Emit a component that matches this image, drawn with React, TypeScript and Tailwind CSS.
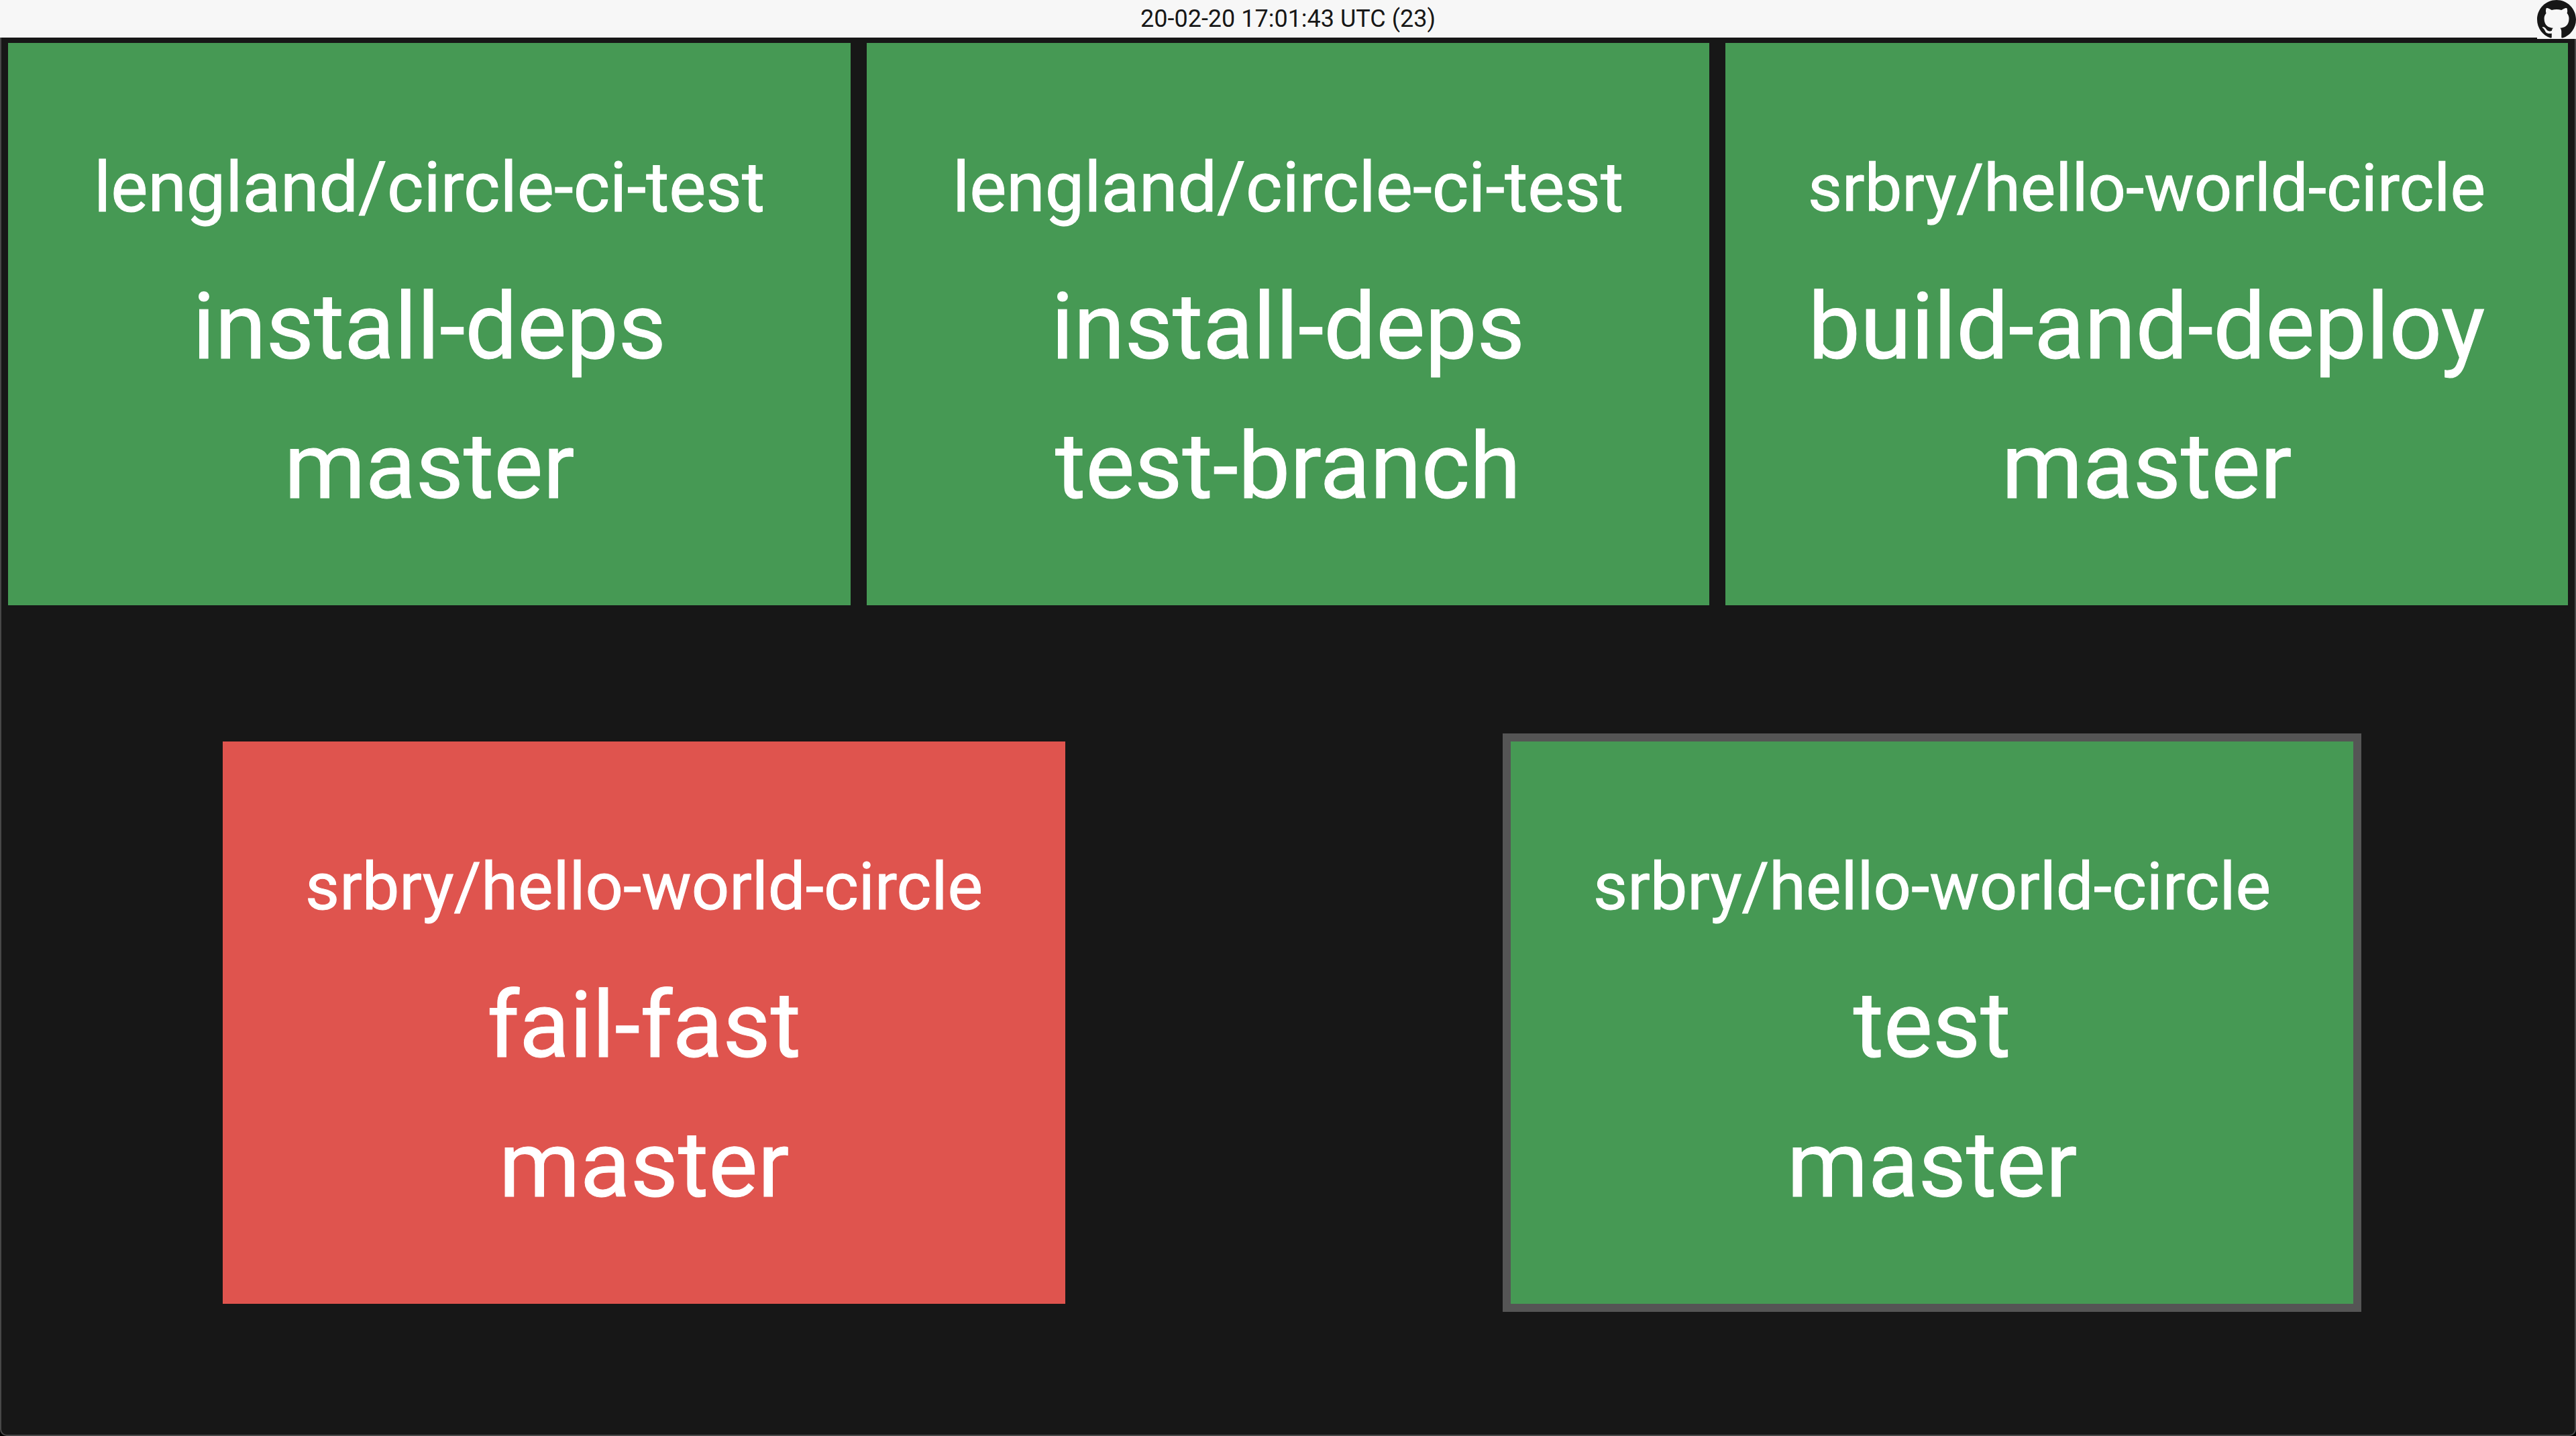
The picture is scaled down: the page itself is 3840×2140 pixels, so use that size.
type Build = {
  repo: string;
  job: string;
  branch: string;
  failed?: boolean;
  active?: boolean;
};

const topRow: Build[] = [
  { repo: "lengland/circle-ci-test", job: "install-deps", branch: "master" },
  { repo: "lengland/circle-ci-test", job: "install-deps", branch: "test-branch" },
  { repo: "srbry/hello-world-circle", job: "build-and-deploy", branch: "master" },
];

const bottomRow: Build[] = [
  { repo: "srbry/hello-world-circle", job: "fail-fast", branch: "master", failed: true },
  { repo: "srbry/hello-world-circle", job: "test", branch: "master", active: true },
];

function GithubMark() {
  return (
    <svg viewBox="0 0 16 16" fill="currentColor" className="size-[58px]" aria-hidden="true">
      <path d="M8 0C3.58 0 0 3.58 0 8c0 3.54 2.29 6.53 5.47 7.59.4.07.55-.17.55-.38 0-.19-.01-.82-.01-1.49-2.01.37-2.53-.49-2.69-.94-.09-.23-.48-.94-.82-1.13-.28-.15-.68-.52-.01-.53.63-.01 1.08.58 1.23.82.72 1.21 1.87.87 2.33.66.07-.52.28-.87.51-1.07-1.78-.2-3.64-.89-3.64-3.95 0-.87.31-1.59.82-2.15-.08-.2-.36-1.02.08-2.12 0 0 .67-.21 2.2.82.64-.18 1.32-.27 2-.27s1.36.09 2 .27c1.53-1.04 2.2-.82 2.2-.82.44 1.1.16 1.92.08 2.12.51.56.82 1.27.82 2.15 0 3.07-1.87 3.75-3.65 3.95.29.25.54.73.54 1.48 0 1.07-.01 1.93-.01 2.2 0 .21.15.46.55.38A8.01 8.01 0 0 0 16 8c0-4.42-3.58-8-8-8z" />
    </svg>
  );
}

function Tile({ repo, job, branch, failed, active }: Build) {
  // Longer repository names step down in size so they stay on one line.
  const repoSize = repo.length > 23 ? "text-[99px]" : "text-[104px]";
  return (
    <article
      className={`flex w-1/3 flex-col items-center border-12 bg-clip-padding pt-[113px] pb-[103px] text-[138px] leading-[208px] text-white [-webkit-text-stroke:1px_white] ${
        failed ? "bg-[#df544e]" : "bg-[#469954]"
      } ${active ? "border-[#555555]" : "border-transparent"}`}
    >
      <h2 className={`${repoSize} leading-[206px]`}>{repo}</h2>
      <p>{job}</p>
      <p>{branch}</p>
    </article>
  );
}

export default function App() {
  return (
    <div className="flex min-h-screen flex-col bg-black font-[Roboto,sans-serif]">
      <header className="relative z-10 flex h-14 items-center justify-center bg-[#f7f7f7] text-[36px] text-[#171717]">
        <time>20-02-20 17:01:43 UTC (23)</time>
        <a href="#github" aria-label="GitHub" className="absolute top-0 right-0 bg-[#f7f7f7]">
          <GithubMark />
        </a>
      </header>
      <main className="-mt-1 flex flex-1 flex-col rounded-b-[10px] bg-[#171717] inset-ring-2 inset-ring-[#484848]">
        <section className="flex">
          {topRow.map((build, i) => (
            <Tile key={i} {...build} />
          ))}
        </section>
        <section className="flex flex-1 items-center justify-around pb-1.5">
          {bottomRow.map((build, i) => (
            <Tile key={i} {...build} />
          ))}
        </section>
      </main>
    </div>
  );
}
